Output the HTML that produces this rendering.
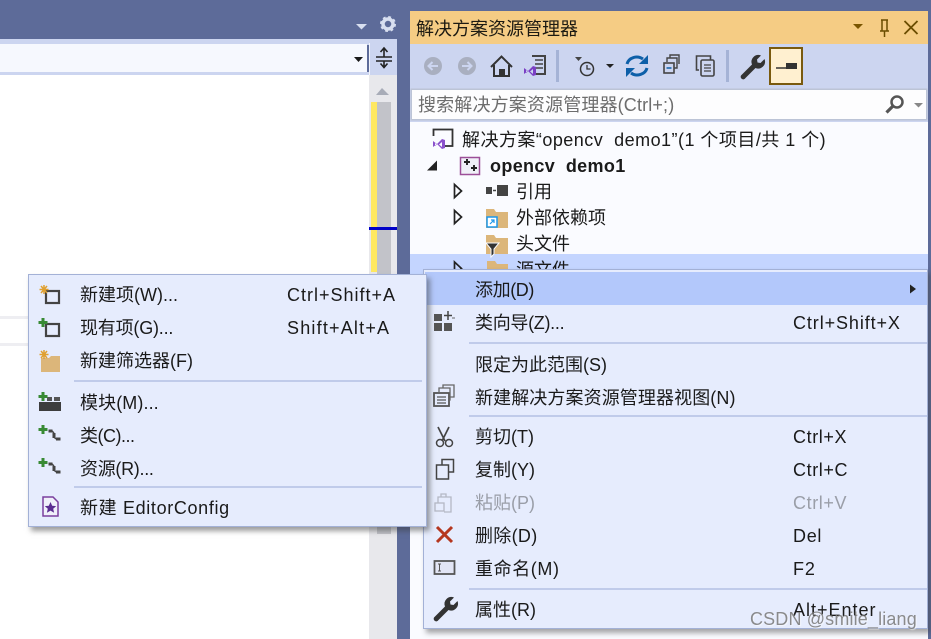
<!DOCTYPE html>
<html><head><meta charset="utf-8"><style>
html,body{margin:0;padding:0}
body{width:931px;height:639px;overflow:hidden;position:relative;background:#5d6b99;font-family:"Liberation Sans","Noto Sans CJK SC",sans-serif;color:#1a1a1a}
.b{position:absolute}
.t{position:absolute;white-space:nowrap;font-size:18px;height:26px;line-height:26px;margin-top:-12px;letter-spacing:0}
svg{position:absolute;left:0;top:0;overflow:visible}
.sep{position:absolute;height:1.500px;background:#c0cbea}
.dis{color:#9a9ea8}
</style></head><body>
<!-- left editor -->
<div class="b" style="left:0;top:39px;width:397px;height:6px;background:#ccd5f0"></div>
<div class="b" style="left:0;top:44px;width:367px;height:28px;background:#f6f8fe"></div>
<div class="b" style="left:0;top:72px;width:369px;height:3px;background:#ccd5f0"></div>
<div class="b" style="left:0;top:75px;width:369px;height:564px;background:#fff"></div>
<div class="b" style="left:0;top:316px;width:28px;height:3px;background:#eeeef2"></div>
<div class="b" style="left:0;top:343px;width:28px;height:3px;background:#eeeef2"></div>
<div class="b" style="left:369px;top:43px;width:28px;height:32px;background:#ccd5f0;border-left:1px solid #f0f3fc;box-sizing:border-box"></div>
<div class="b" style="left:369px;top:75px;width:28px;height:564px;background:#e8e8ec"></div>
<div class="b" style="left:377px;top:102px;width:14px;height:432px;background:#c2c3c9"></div>
<div class="b" style="left:371px;top:102px;width:6px;height:170px;background:#ffe860"></div>
<div class="b" style="left:369px;top:227px;width:28px;height:3px;background:#0000c8"></div>
<svg width="931" height="639">
<path d="M354 57l9 0-4.500 5z" fill="#1a1a1a"/>
<path d="M384 49v8M380.500 52l3.500-4 3.500 4M384 67v-6M380.500 63.500l3.500 4 3.500-4" fill="none" stroke="#222" stroke-width="1.600"/>
<path d="M376 57h16M376 61h16" stroke="#222" stroke-width="1.500"/>
<path d="M376 95l6-7 7 7z" fill="#a8acb8"/>
<path d="M356 24h11l-5.500 5.500z" fill="#d8dff0"/>
<circle cx="388" cy="24" r="5" fill="none" stroke="#d8dff0" stroke-width="3.500"/>
<circle cx="388" cy="24" r="7" fill="none" stroke="#d8dff0" stroke-width="2" stroke-dasharray="2.800 2.700"/>
</svg>
<!-- explorer panel -->
<div class="b" style="left:410px;top:11px;width:518px;height:33px;background:#f5cc84"></div>
<div class="t" style="left:416px;top:28px;color:#1c1a12">解决方案资源管理器</div>
<div class="b" style="left:410px;top:44px;width:518px;height:78px;background:#ccd5f0"></div>
<div class="b" style="left:412px;top:90px;width:514px;height:29px;background:#fdfdfe;box-shadow:0 0 0 1.500px #bcc4d6"></div>
<div class="t" style="left:418px;top:104px;color:#6d6d6d;letter-spacing:.15px">搜索解决方案资源管理器(Ctrl+;)</div>
<div class="b" style="left:410px;top:122px;width:518px;height:517px;background:#fafbff"></div>
<div class="b" style="left:410px;top:254px;width:518px;height:30px;background:#c4d5ff"></div>
<div class="b" style="left:928px;top:0;width:3px;height:639px;background:#5d6b99"></div>
<svg width="931" height="639">
<path d="M853 24h10l-5 5z" fill="#7a5500"/>
<path d="M881 20h7M882 20v11h5V20M880 31h9M884.500 31v6" fill="none" stroke="#6b4d00" stroke-width="1.500"/>
<path d="M904.500 21l13 13M917.500 21l-13 13" stroke="#6b4d00" stroke-width="1.800"/>
<!-- toolbar -->
<circle cx="433" cy="66" r="9" fill="#a9afc0"/><path d="M438 66h-9M432.500 62l-4 4 4 4" fill="none" stroke="#ccd5f0" stroke-width="2"/>
<circle cx="467" cy="66" r="9" fill="#a9afc0"/><path d="M462 66h9M467.500 62l4 4-4 4" fill="none" stroke="#ccd5f0" stroke-width="2"/>
<path d="M491 67l10.500-10.500L512 67" fill="none" stroke="#333" stroke-width="2"/>
<path d="M494 65v11h15V65" fill="none" stroke="#333" stroke-width="2"/><rect x="499" y="69" width="6" height="7" fill="#333"/>
<path d="M532 56h13v18h-10" fill="none" stroke="#444" stroke-width="2"/>
<path d="M535 60h8M535 64h8M535 68h8" stroke="#444" stroke-width="1.600"/>
<path transform="translate(91 -73)" fill-rule="evenodd" d="M433 141l4 3 5-5 3 1v8l-3 1-5-5-4 3zM435 143v3l2-1.500zM439 144.500l3 2.500v-5z" fill="#7a3fc4"/>
<rect x="556" y="50" width="3" height="32" fill="#a5b3d6"/>
<path d="M575 57h7l-3.500 4z" fill="#444"/>
<circle cx="587" cy="69" r="6.500" fill="none" stroke="#333" stroke-width="1.500"/><path d="M587 65v4h3.500" fill="none" stroke="#333" stroke-width="1.300"/>
<path d="M606 64h8l-4 4z" fill="#222"/>
<path d="M627 64a10 9 0 0 1 16-5M647 68a10 9 0 0 1-16 5" fill="none" stroke="#0d5fa8" stroke-width="3"/>
<path d="M648 55v9h-9zM626 77v-9h9z" fill="#0d5fa8"/>
<rect x="664" y="63" width="10" height="10" fill="none" stroke="#444" stroke-width="1.600"/>
<path d="M667 62v-4h10v10h-3M670 58v-3h9v9" fill="none" stroke="#444" stroke-width="1.400"/><path d="M666.500 68h5" stroke="#0d5fa8" stroke-width="1.500"/>
<path d="M699 70h-2.500v-14h14v4" fill="none" stroke="#444" stroke-width="1.600"/>
<rect x="701" y="60" width="13" height="16" rx="1.500" fill="#ccd5f0" stroke="#444" stroke-width="1.600"/>
<path d="M704 65h7M704 68h7M704 71h7" stroke="#444" stroke-width="1.300"/>
<rect x="726" y="50" width="3" height="32" fill="#a5b3d6"/>
<path d="M741 75.500l11-11a7 7 0 0 1 1.500-7.500 7 7 0 0 1 7.500-1.500l-4 4 .5 3 3 .5 4-4a7 7 0 0 1-1.500 7.500 7 7 0 0 1-7.500 1.500l-10 10a2.500 2.500 0 0 1-4.500-2.500z" fill="#333"/>
<rect x="770" y="48" width="32" height="36" fill="#fff0d0" stroke="#7a5a0e" stroke-width="2"/>
<path d="M776 68h11" stroke="#333" stroke-width="1.500"/><rect x="786" y="63" width="11" height="6" fill="#333"/>
<!-- search -->
<circle cx="897" cy="102" r="5.500" fill="none" stroke="#555" stroke-width="2.500"/><path d="M893 106l-6.500 6.500" stroke="#555" stroke-width="3.200"/>
<path d="M914 103h9l-4.500 4.500z" fill="#888"/>
<!-- tree -->
<rect x="433.500" y="129.500" width="19" height="16.500" fill="none" stroke="#333" stroke-width="1.800"/>
<rect x="431" y="136" width="14" height="15" fill="#fafbff"/>
<path fill-rule="evenodd" d="M433 141l4 3 5-5 3 1v8l-3 1-5-5-4 3zM435 143v3l2-1.500zM439 144.500l3 2.500v-5z" fill="#8a50cc"/>
<path d="M427 170.500l10-10v10z" fill="#222"/>
<rect x="460.500" y="157.500" width="19" height="17" fill="#f0f0f8" stroke="#9c4f98" stroke-width="1.500"/>
<path d="M464 162h6M467 159v6M471 168h6M474 165v6" stroke="#222" stroke-width="1.900"/>
<path d="M454.500 184.500l7 6.500-7 6.500z" fill="#fafbff" stroke="#222" stroke-width="1.700"/>
<path d="M454.500 210.500l7 6.500-7 6.500z" fill="#fafbff" stroke="#222" stroke-width="1.700"/>
<path d="M454.500 262l7 6.500-7 6.500z" fill="#c4d5ff" stroke="#222" stroke-width="1.700"/>
<rect x="486" y="187" width="6" height="7" fill="#444"/><path d="M493 190.500h3" stroke="#444" stroke-width="1.500"/><rect x="497" y="185" width="11" height="11" fill="#444"/>
<path d="M486 209h8l2 3h12v16h-22z" fill="#dcb67a"/>
<rect x="487" y="217" width="10" height="10" fill="#fff" stroke="#1c97ea" stroke-width="1.500"/><path d="M490 224l4-4M491 220h3v3" stroke="#1c97ea" stroke-width="1.200" fill="none"/>
<path d="M486 235h8l2 3h12v16h-22z" fill="#dcb67a"/>
<path d="M486 243h13l-5 6v5l-3 3v-8z" fill="#333" stroke="#fafbff" stroke-width="1"/>
<path d="M487 261h8l2 3h11v6h-21z" fill="#dcb67a"/>
</svg>
<div class="t" style="left:462px;top:139px;letter-spacing:.47px">解决方案“opencv&nbsp; demo1”(1 个项目/共 1 个)</div>
<div class="t" style="left:490px;top:165px;font-weight:700;letter-spacing:.35px">opencv&nbsp; demo1</div>
<div class="t" style="left:516px;top:191px">引用</div>
<div class="t" style="left:516px;top:217px">外部依赖项</div>
<div class="t" style="left:516px;top:243px">头文件</div>
<div class="t" style="left:516px;top:269px">源文件</div>
<!-- right context menu -->
<div class="b" style="left:423px;top:269px;width:505px;height:360px;background:#e6ecfd;border:1.500px solid #a3b1d6;box-sizing:border-box;box-shadow:3px 4px 5px rgba(60,60,60,.45)"></div>
<div class="b" style="left:425px;top:272px;width:502px;height:33px;background:#b3c8fb"></div>
<svg width="931" height="639"><path d="M910 284.500l6 4.500-6 4.500z" fill="#222"/></svg>
<div class="sep" style="left:469px;top:342px;width:458px"></div>
<div class="sep" style="left:469px;top:415px;width:458px"></div>
<div class="sep" style="left:469px;top:588px;width:458px"></div>
<div class="t" style="left:475px;top:289px;letter-spacing:-.4px">添加(D)</div>
<div class="t" style="left:475px;top:322px;letter-spacing:-.3px">类向导(Z)...</div><div class="t" style="left:793px;top:322px;letter-spacing:.9px">Ctrl+Shift+X</div>
<div class="t" style="left:475px;top:364px">限定为此范围(S)</div>
<div class="t" style="left:475px;top:397px;letter-spacing:.1px">新建解决方案资源管理器视图(N)</div>
<div class="t" style="left:475px;top:436px">剪切(T)</div><div class="t" style="left:793px;top:436px;letter-spacing:.6px">Ctrl+X</div>
<div class="t" style="left:475px;top:469px">复制(Y)</div><div class="t" style="left:793px;top:469px;letter-spacing:.6px">Ctrl+C</div>
<div class="t dis" style="left:475px;top:502px">粘贴(P)</div><div class="t dis" style="left:793px;top:502px;letter-spacing:.6px">Ctrl+V</div>
<div class="t" style="left:475px;top:535px;letter-spacing:.3px">删除(D)</div><div class="t" style="left:793px;top:535px;letter-spacing:.7px">Del</div>
<div class="t" style="left:475px;top:568px;letter-spacing:.6px">重命名(M)</div><div class="t" style="left:793px;top:568px;letter-spacing:.9px">F2</div>
<div class="t" style="left:475px;top:609px">属性(R)</div><div class="t" style="left:793px;top:609px;letter-spacing:1px">Alt+Enter</div>
<svg width="931" height="639">
<g fill="#555"><rect x="434" y="314" width="8" height="7"/><rect x="444" y="323" width="8" height="8"/><rect x="434" y="323" width="8" height="8"/></g>
<path d="M448 311v9M444 315.500h8" stroke="#444" stroke-width="1.500"/><path d="M452 318h3" stroke="#666"/>
<rect x="434" y="393" width="15" height="13" fill="#e6ecfd" stroke="#555" stroke-width="1.800"/>
<path d="M437 397h9M437 400h9M437 403h9" stroke="#555" stroke-width="1.200"/>
<path d="M439 392v-4h11v12h-1M443 388v-3h11v12h-4" fill="none" stroke="#666" stroke-width="1.300"/>
<path d="M438 427l7 14M449 427l-7 14" stroke="#444" stroke-width="1.700"/>
<circle cx="440" cy="443" r="3.500" fill="none" stroke="#444" stroke-width="1.500"/><circle cx="449" cy="443" r="3.500" fill="none" stroke="#444" stroke-width="1.500"/>
<rect x="436.500" y="465" width="12" height="14" fill="#e6ecfd" stroke="#444" stroke-width="1.500"/>
<path d="M442 465v-5.500h11.500V472h-5" fill="none" stroke="#444" stroke-width="1.500"/>
<g opacity=".3"><rect x="435" y="503" width="9" height="8" fill="none" stroke="#444" stroke-width="1.300"/><path d="M438 503v-6h13v15h-7M441 497v-3h5v3" fill="none" stroke="#444" stroke-width="1.300"/></g>
<path d="M437 527l15 15M452 527l-15 15" stroke="#b5371f" stroke-width="3"/>
<rect x="434.500" y="561" width="20" height="13" fill="#e2e5f5" stroke="#555" stroke-width="1.800"/>
<path d="M438 564h3M438 571h3M439.500 564v7" stroke="#555" stroke-width="1"/>
<g transform="translate(-307 542)"><path d="M741 75.500l11-11a7 7 0 0 1 1.500-7.500 7 7 0 0 1 7.500-1.500l-4 4 .5 3 3 .5 4-4a7 7 0 0 1-1.500 7.500 7 7 0 0 1-7.500 1.500l-10 10a2.500 2.500 0 0 1-4.500-2.500z" fill="#333"/></g>
</svg>
<!-- left context menu -->
<div class="b" style="left:28px;top:274px;width:399px;height:253px;background:#e6ecfd;border:1.500px solid #a3b1d6;box-sizing:border-box;box-shadow:3px 4px 5px rgba(60,60,60,.5)"></div>
<div class="sep" style="left:74px;top:380px;width:348px"></div>
<div class="sep" style="left:74px;top:486px;width:348px"></div>
<div class="t" style="left:80px;top:294px">新建项(W)...</div><div class="t" style="left:287px;top:294px;letter-spacing:1px">Ctrl+Shift+A</div>
<div class="t" style="left:80px;top:327px;letter-spacing:-.2px">现有项(G)...</div><div class="t" style="left:287px;top:327px;letter-spacing:1.2px">Shift+Alt+A</div>
<div class="t" style="left:80px;top:360px">新建筛选器(F)</div>
<div class="t" style="left:80px;top:402px;letter-spacing:.1px">模块(M)...</div>
<div class="t" style="left:80px;top:435px;letter-spacing:-.5px">类(C)...</div>
<div class="t" style="left:80px;top:468px;letter-spacing:-.3px">资源(R)...</div>
<div class="t" style="left:80px;top:507px;letter-spacing:.65px">新建 EditorConfig</div>
<svg width="931" height="639">
<rect x="46" y="291" width="13" height="12" fill="#e6ecfd" stroke="#444" stroke-width="2.200"/>
<path d="M44 285v9M39.500 289.500h9M41 286l6 7M47 286l-6 7" stroke="#e0a030" stroke-width="1.500"/>
<rect x="46" y="324" width="13" height="12" fill="#e6ecfd" stroke="#444" stroke-width="2.200"/>
<path d="M43 318v9M38.500 322.500h9" stroke="#388a34" stroke-width="3"/>
<path d="M41 358h8l2-2h9v16H41z" fill="#dcb67a"/>
<path d="M44 350v9M39.500 354.500h9M41 351l6 7M47 351l-6 7" stroke="#e0a030" stroke-width="1.500"/>
<path d="M39 402h22v9H39z" fill="#3d3d3d"/><path d="M47 397h5v4h-5zM54 397h6v4h-6z" fill="#555"/>
<path d="M43 392v9M38.500 396.500h9" stroke="#388a34" stroke-width="3"/>
<path d="M43 425v9M38.500 429.500h9" stroke="#388a34" stroke-width="3"/>
<path d="M48.500 431h4M54 433v5M56 439h4.500" fill="none" stroke="#444" stroke-width="3"/><path d="M52 431l2 2M54 437l2 2" stroke="#444" stroke-width="1.500"/>
<path d="M43 458v9M38.500 462.500h9" stroke="#388a34" stroke-width="3"/>
<path d="M48.500 464h4M54 466v5M56 472h4.500" fill="none" stroke="#444" stroke-width="3"/><path d="M52 464l2 2M54 470l2 2" stroke="#444" stroke-width="1.500"/>
<path d="M43 497h10l5 5v14H43z" fill="#f0f0fa" stroke="#7a3f9e" stroke-width="1.500"/>
<path d="M50.500 502l1.700 3.700 4 .4-3 2.600.9 4-3.600-2.100-3.600 2.100.9-4-3-2.600 4-.4z" fill="#5b2d91"/>
</svg>
<!-- watermark -->
<div class="t" style="left:750px;top:619px;margin-top:-13px;color:rgba(120,120,120,.85);letter-spacing:.15px;text-shadow:1px 1px 1px rgba(255,255,255,.6)">CSDN @smile_liang</div>
</body></html>
